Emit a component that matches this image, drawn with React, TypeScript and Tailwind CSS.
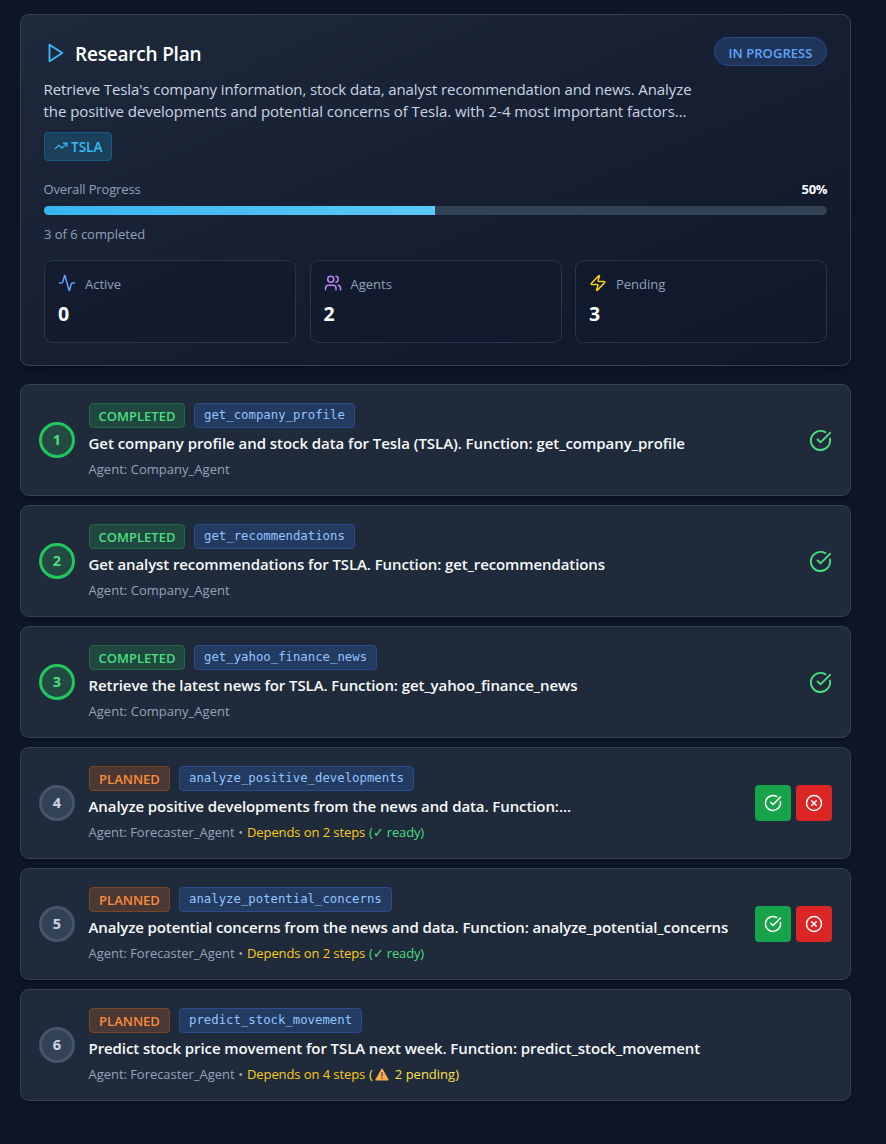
import type { ReactNode } from "react";
import { Activity, CircleCheckBig, CircleX, TrendingUp, Users, Zap } from "lucide-react";

type Step = {
  id: number;
  done: boolean;
  tool: string;
  title: string;
  tracking: string;
  agent: string;
  depends?: string;
  ready?: boolean;
  pending?: string;
  actions?: boolean;
};

const steps: Step[] = [
  {
    id: 1,
    done: true,
    tool: "get_company_profile",
    title: "Get company profile and stock data for Tesla (TSLA). Function: get_company_profile",
    tracking: "tracking-[-0.052px]",
    agent: "Company_Agent",
  },
  {
    id: 2,
    done: true,
    tool: "get_recommendations",
    title: "Get analyst recommendations for TSLA. Function: get_recommendations",
    tracking: "tracking-[-0.1px]",
    agent: "Company_Agent",
  },
  {
    id: 3,
    done: true,
    tool: "get_yahoo_finance_news",
    title: "Retrieve the latest news for TSLA. Function: get_yahoo_finance_news",
    tracking: "tracking-[-0.09px]",
    agent: "Company_Agent",
  },
  {
    id: 4,
    done: false,
    tool: "analyze_positive_developments",
    title: "Analyze positive developments from the news and data. Function:...",
    tracking: "tracking-[-0.09px]",
    agent: "Forecaster_Agent",
    depends: "Depends on 2 steps",
    ready: true,
    actions: true,
  },
  {
    id: 5,
    done: false,
    tool: "analyze_potential_concerns",
    title: "Analyze potential concerns from the news and data. Function: analyze_potential_concerns",
    tracking: "tracking-[-0.12px]",
    agent: "Forecaster_Agent",
    depends: "Depends on 2 steps",
    ready: true,
    actions: true,
  },
  {
    id: 6,
    done: false,
    tool: "predict_stock_movement",
    title: "Predict stock price movement for TSLA next week. Function: predict_stock_movement",
    tracking: "tracking-[-0.083px]",
    agent: "Forecaster_Agent",
    depends: "Depends on 4 steps",
    pending: "2 pending)",
  },
];

function Stat({ icon, label, value }: { icon: ReactNode; label: string; value: number }) {
  return (
    <div className="h-[83px] flex-1 rounded-[9px] border border-slate-700/70 bg-slate-900/50 px-[13px] pt-[13px]">
      <div className="flex items-start gap-[9px]">
        {icon}
        <span className="mt-px text-[13px] leading-[19px] text-slate-400">{label}</span>
      </div>
      <div className="mt-[7px] text-[19.5px] leading-[26px] font-bold text-white">{value}</div>
    </div>
  );
}

function WarningIcon() {
  return (
    <svg viewBox="0 0 14 13" className="mr-px ml-[2px] h-[13px] w-[14px]">
      <path d="M7 .8 13.3 12H.7Z" fill="#fbab4c" stroke="#fbab4c" strokeLinejoin="round" />
      <path d="M7 4.2v4.2M7 9.8v1.2" stroke="#4b4650" strokeWidth="1.3" />
    </svg>
  );
}

function StepCard({ step }: { step: Step }) {
  return (
    <section className="flex h-[112px] items-center rounded-[9px] border border-[#334155] bg-[#1f2a3b] px-[18px] shadow-md shadow-black/20">
      <div
        className={
          step.done
            ? "flex size-9 shrink-0 items-center justify-center rounded-full border-[3px] border-[#22c55e] bg-[#224a42] text-[14.5px] font-bold text-[#4ade80]"
            : "flex size-9 shrink-0 items-center justify-center rounded-full border-[3px] border-[#475569] bg-[#334155] text-[14.5px] font-bold text-[#cbd5e1]"
        }
      >
        {step.id}
      </div>
      <div className="ml-[14px] min-w-0 flex-1 whitespace-nowrap">
        <div className="flex h-[25px] gap-[9px]">
          <span
            className={
              step.done
                ? "flex w-24 items-center justify-center rounded-[4px] border border-[#22694a] bg-[#204840] pt-px text-[13px] leading-[18px] font-semibold text-[#4ade80]"
                : "flex w-[81px] items-center justify-center rounded-[4px] border border-[#7a4628] bg-[#493833] pt-px text-[13px] leading-[18px] font-semibold text-[#fb8b3c]"
            }
          >
            {step.done ? "COMPLETED" : "PLANNED"}
          </span>
          <code className="flex items-center rounded-[4px] border border-[#2a4c8c] bg-[#233a61] px-[9px] pb-px font-['DejaVu_Sans_Mono',monospace] text-[12.32px] text-[#93c5fd]">
            {step.tool}
          </code>
        </div>
        <h3 className={`mt-1 -ml-[0.5px] text-[15px] leading-[22px] font-semibold text-slate-50 ${step.tracking}`}>{step.title}</h3>
        <div className="mt-[6px] -mb-px flex h-[18px] items-center text-[13px] leading-[18px] text-[#94a3b8]">
          <span className={step.depends ? "-ml-[0.5px] tracking-[-0.04px]" : "-ml-[0.5px] tracking-[0.03px]"}>Agent: {step.agent}</span>
          {step.depends && (
            <>
              <span className="w-[12.5px] text-center">•</span>
              <span className="w-[122px] tracking-[-0.09px] text-[#facc15]">{step.depends}</span>
            </>
          )}
          {step.ready && <span className="tracking-[-0.15px] text-[#4ade80]">(✓ ready)</span>}
          {step.pending && (
            <span className="flex items-center text-[#fde047]">
              (
              <WarningIcon />
              <span className="ml-[5px]">{step.pending}</span>
            </span>
          )}
        </div>
      </div>
      {step.done && <CircleCheckBig size={23} className="shrink-0 text-[#4ade80]" />}
      {step.actions && (
        <div className="flex shrink-0 gap-[5px]">
          <button className="flex size-9 items-center justify-center rounded-[4px] bg-[#16a34a] text-white">
            <CircleCheckBig size={18} />
          </button>
          <button className="flex size-9 items-center justify-center rounded-[4px] bg-[#dc2626] text-white">
            <CircleX size={18} />
          </button>
        </div>
      )}
    </section>
  );
}

export default function App() {
  return (
    <main className="min-h-screen bg-[#0e1729] pt-[14px] pr-[35px] pb-5 pl-5 font-['Open_Sans',sans-serif]">
      <section className="h-[352px] rounded-[9px] border border-[#334155] bg-linear-to-br from-[#1e293b] to-[#0f172a] px-[23px] pt-[22px] shadow-lg shadow-black/20">
        <div className="flex h-[33px] items-start justify-between">
          <div className="flex h-[33px] items-center gap-[9px]">
            <svg viewBox="0 0 24 24" fill="none" stroke="#38bdf8" strokeWidth="2" strokeLinecap="round" strokeLinejoin="round" className="mb-px size-[22px]">
              <polygon points="6 3 20 12 6 21 6 3" />
            </svg>
            <h1 className="mt-[2px] text-[19px] leading-[27px] font-semibold tracking-[-0.2px] text-white">Research Plan</h1>
          </div>
          <span className="flex h-[29px] w-[113px] items-center justify-center rounded-full border border-[#294b8c] bg-[#1f3459] pt-[3px] text-[13px] leading-[18px] font-semibold tracking-[0.05px] text-[#60a5fa]">
            IN PROGRESS
          </span>
        </div>
        <p className="mt-2 text-[15px] leading-[22px] whitespace-nowrap text-slate-300">
          <span className="-ml-[0.5px] block tracking-[-0.098px]">
            Retrieve Tesla's company information, stock data, analyst recommendation and news. Analyze
          </span>
          <span className="-ml-[0.5px] block tracking-[-0.05px]">
            the positive developments and potential concerns of Tesla. with 2-4 most important factors...
          </span>
        </p>
        <div className="mt-[10px] flex h-[29px] w-[68px] items-center gap-[3px] rounded-[4px] border border-[#165b83] bg-[#1b405b] px-[9px] text-[13.5px] font-semibold text-[#38bdf8]">
          <TrendingUp size={14} className="mb-px shrink-0" />
          <span className="leading-[18px]">TSLA</span>
        </div>
        <div className="mt-[19px] flex h-5 items-center justify-between text-[13px]">
          <span className="-ml-[0.5px] tracking-[-0.15px] text-slate-400">Overall Progress</span>
          <span className="font-bold tracking-[-0.4px] text-white">50%</span>
        </div>
        <div className="mt-[6px] h-[9px] overflow-hidden rounded-full bg-[#334155]">
          <div className="h-full w-[391px] bg-linear-to-r from-[#38b4ee] to-[#5ac8fa]" />
        </div>
        <div className="mt-[9px] text-[13px] leading-5 tracking-[-0.04px] text-slate-400">3 of 6 completed</div>
        <div className="mt-4 flex gap-[13.5px]">
          <Stat icon={<Activity size={18} className="text-[#60a5fa]" />} label="Active" value={0} />
          <Stat icon={<Users size={18} className="text-[#c084fc]" />} label="Agents" value={2} />
          <Stat icon={<Zap size={18} className="text-[#facc15]" />} label="Pending" value={3} />
        </div>
      </section>
      <div className="mt-[18px] flex flex-col gap-[9px]">
        {steps.map((step) => (
          <StepCard key={step.id} step={step} />
        ))}
      </div>
    </main>
  );
}
